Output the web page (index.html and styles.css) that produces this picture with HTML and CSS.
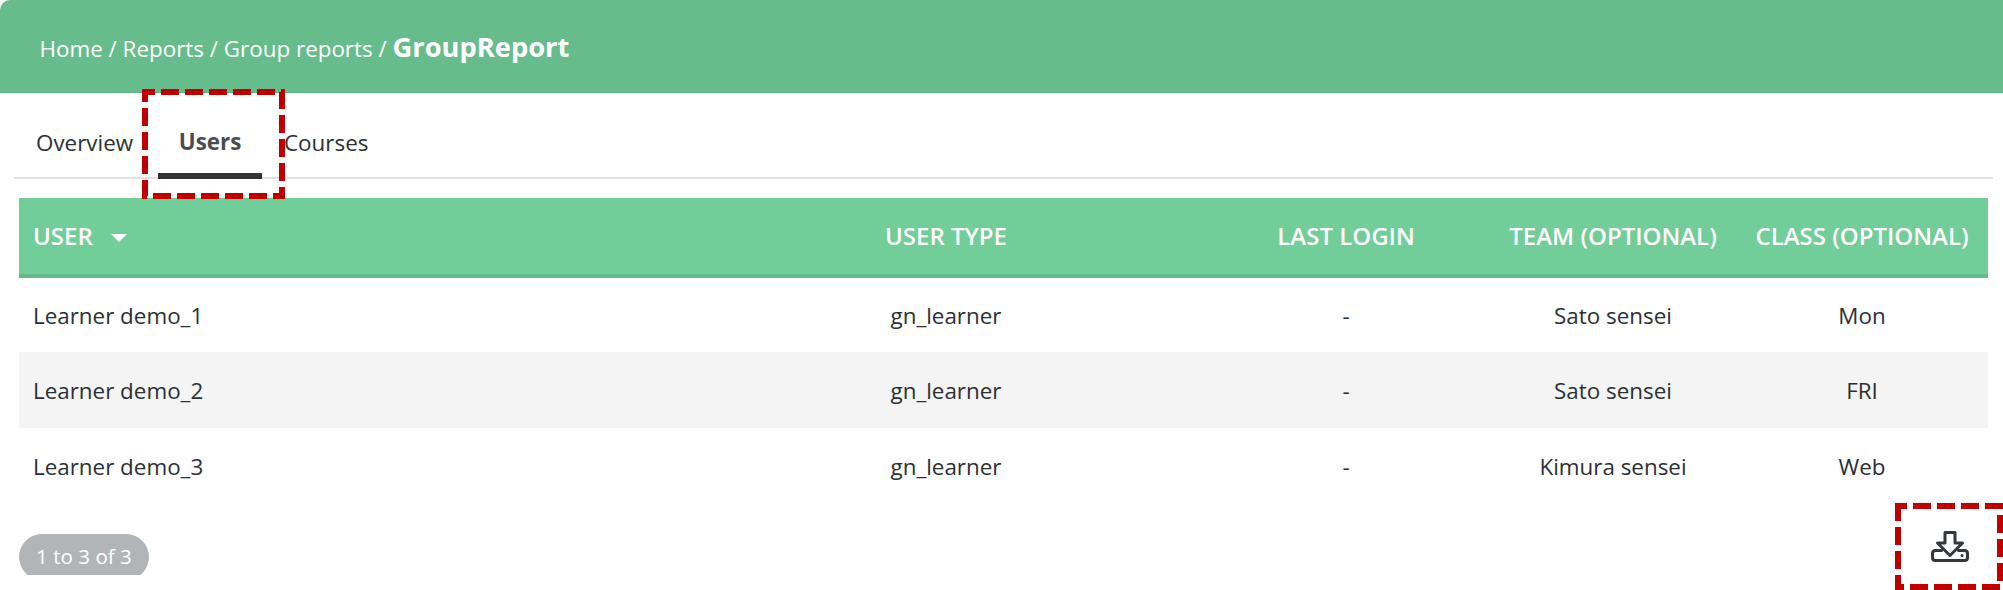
FILE: index.html
```html
<!DOCTYPE html>
<html lang="en">
<head>
    <meta charset="UTF-8">
    <meta name="viewport" content="width=device-width, initial-scale=1.0">
    <title>GroupReport</title>
    <link rel="stylesheet" href="styles.css">
</head>
<body>
    <header class="page-header">
        <span class="crumb">Home / Reports / Group reports / </span><strong class="crumb-current">GroupReport</strong>
    </header>

    <nav class="tabs">
        <a class="tab tab-overview">Overview</a>
        <a class="tab tab-active">Users</a>
        <a class="tab tab-courses">Courses</a>
    </nav>

    <table class="report">
        <colgroup>
            <col class="col-user">
            <col class="col-type">
            <col class="col-login">
            <col class="col-team">
            <col class="col-class">
        </colgroup>
        <thead>
            <tr>
                <th class="left">USER <span class="sort-caret"></span></th>
                <th>USER TYPE</th>
                <th>LAST LOGIN</th>
                <th>TEAM (OPTIONAL)</th>
                <th>CLASS (OPTIONAL)</th>
            </tr>
        </thead>
        <tbody>
            <tr>
                <td class="left">Learner demo_1</td>
                <td>gn_learner</td>
                <td>-</td>
                <td>Sato sensei</td>
                <td>Mon</td>
            </tr>
            <tr class="striped">
                <td class="left">Learner demo_2</td>
                <td>gn_learner</td>
                <td>-</td>
                <td>Sato sensei</td>
                <td>FRI</td>
            </tr>
            <tr>
                <td class="left">Learner demo_3</td>
                <td>gn_learner</td>
                <td>-</td>
                <td>Kimura sensei</td>
                <td>Web</td>
            </tr>
        </tbody>
    </table>

    <div class="table-footer">
        <div class="pill-clip"><span class="pill">1 to 3 of 3</span></div>
        <button class="download" aria-label="Download">
            <svg width="38" height="33" viewBox="0 0 38 33" fill="none" stroke="#33383c" stroke-width="3" stroke-linejoin="round" stroke-linecap="round">
                <path d="M14 2.500h10V13h7.500L19 25.500 6.500 13H14z"/>
                <path d="M10.500 20.500H4.500q-3 0-3 3v4q0 3 3 3h29q3 0 3-3v-4q0-3-3-3h-6"/>
                <circle cx="31" cy="25.500" r="1.500" fill="#33383c" stroke="none"/>
            </svg>
        </button>
    </div>

    <!-- red callouts drawn on top of the screenshot -->
    <svg class="callout callout-users" width="143" height="110" viewBox="0 0 143 110">
        <rect x="3" y="3" width="137" height="104" fill="none" stroke="#c00000" stroke-width="6" stroke-dasharray="18 6" stroke-dashoffset="8"/>
    </svg>
    <svg class="callout callout-download" width="108" height="87" viewBox="0 0 108 87">
        <rect x="3" y="3" width="102" height="81" fill="none" stroke="#c00000" stroke-width="6" stroke-dasharray="18 6" stroke-dashoffset="9"/>
    </svg>
</body>
</html>
```

FILE: styles.css
```css
* {
    box-sizing: border-box;
}
html, body {
    height: 590px;
    overflow: hidden;
}
body {
    position: relative;
    margin: 0;
    background-color: white;
    font-family: "Open Sans", Arial, sans-serif;
    color: #2b3035;
}
.page-header {
    height: 93px;
    padding: 30px 0 0 39.500px;
    background-color: #66bd8b;
    border-bottom: 1px solid #5fb183;
    border-top-left-radius: 10px;
    color: white;
    font-size: 22.4px;
    line-height: 34px;
}
.crumb-current {
    font-size: 27.3px;
    font-weight: 700;
}
.tabs {
    display: flex;
    height: 86px;
    margin: 0 10px 0 14px;
    border-bottom: 2px solid #e2e2e2;
}
.tab {
    display: block;
    font-size: 22.4px;
    line-height: 27px;
    padding-top: 36px;
}
.tab-overview {
    width: 144px;
    padding-left: 22px;
}
.tab-active {
    width: 104px;
    height: 86px;
    padding-top: 35px;
    border-bottom: 6px solid #333;
    text-align: center;
    font-weight: 700;
    color: #4a4d50;
}
.tab-courses {
    padding-left: 22px;
}
.report {
    width: 1969px;
    margin: 19px 0 0 19px;
    border-collapse: collapse;
    table-layout: fixed;
    font-size: 22.4px;
}
.col-user { width: 671px; }
.col-type { width: 512px; }
.col-login { width: 288px; }
.col-team { width: 246px; }
.col-class { width: 252px; }
.report th {
    height: 78px;
    padding: 0 0 1px;
    background-color: #72ce98;
    border-bottom: 4px solid #66b98a;
    color: white;
    font-size: 24px;
    font-weight: 600;
    text-align: center;
}
.report td {
    height: 76px;
    padding: 0;
    text-align: center;
}
.report .left {
    padding-left: 14px;
    text-align: left;
}
.striped td {
    background-color: #f4f4f4;
}
.sort-caret {
    display: inline-block;
    width: 0;
    height: 0;
    margin: 0 0 3px 12px;
    border-left: 8px solid transparent;
    border-right: 8px solid transparent;
    border-top: 8px solid white;
}
.table-footer {
    display: flex;
    justify-content: space-between;
    margin: 30px 0 0 19px;
}
.pill-clip {
    height: 41px;
    overflow: hidden;
}
.pill {
    display: block;
    width: 130px;
    height: 46px;
    border-radius: 23px;
    background-color: #b2b5b8;
    color: white;
    font-size: 20.600px;
    line-height: 44px;
    text-align: center;
}
.download {
    width: 38px;
    height: 33px;
    margin: -4px 34px 0 0;
    padding: 0;
    border: none;
    background: none;
}
.callout {
    position: absolute;
    pointer-events: none;
}
.callout-users {
    left: 142px;
    top: 89px;
}
.callout-download {
    left: 1895px;
    top: 503px;
}
```
